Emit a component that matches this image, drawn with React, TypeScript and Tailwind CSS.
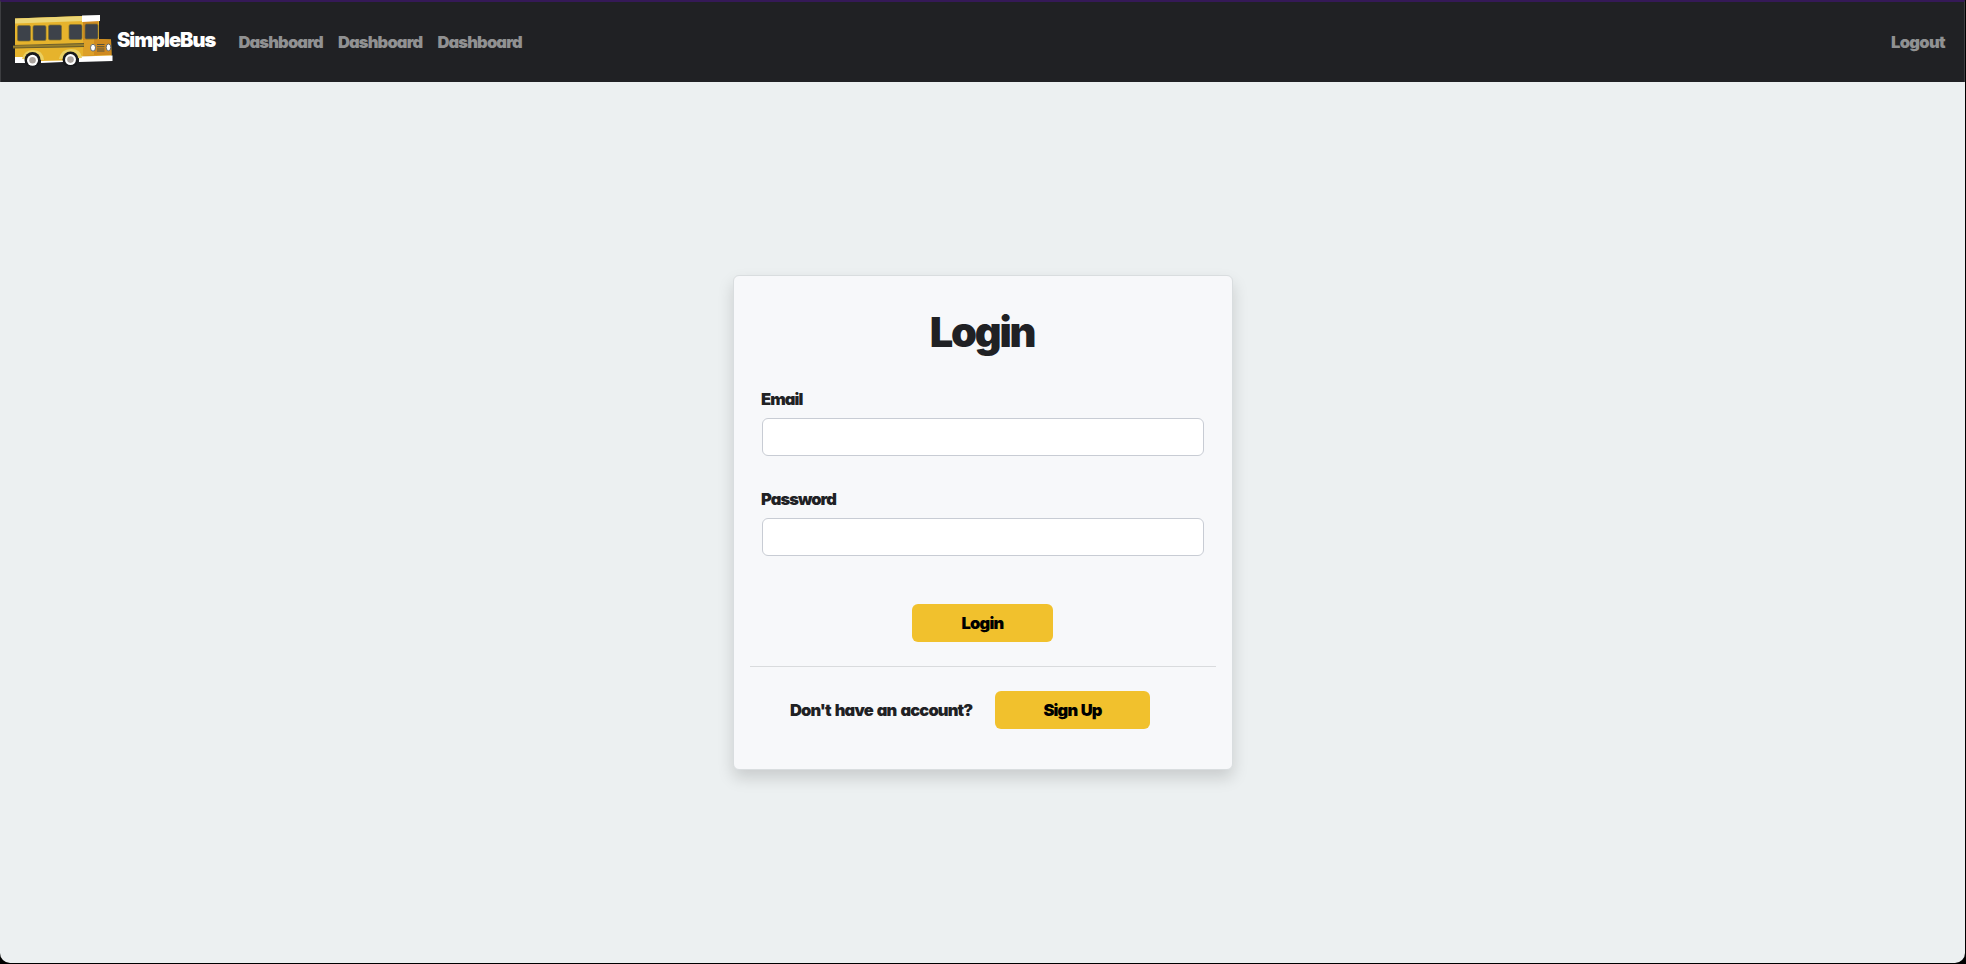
import type { ReactNode } from "react";

function BusLogo() {
  return (
    <svg viewBox="0 0 104 56" className="block h-14 w-[104px] shrink-0" aria-hidden="true">
      {/* body */}
      <path d="M4 8.5 L70 6 L88 9 L88 29 L100 29.5 L100.500 46 L4 49Z" fill="#e6b32c" />
      <path d="M4 8.500 L73 6 L73 11 L4 13.500Z" fill="#ecd676" />
      <path d="M72 10 L87 10 L87 29 L100 29.500 L100.500 45 L72 46Z" fill="#cf8a20" />
      <path d="M72 30 L83 29 L83 45 L72 46Z" fill="#dda028" />
      <path d="M71 5.500 L89 5 L89 11 L71 12Z" fill="#ffffff" />
      {/* lower edge between the wheels */}
      <path d="M30 47 L52 46 L52 51 L30 52Z" fill="#e6b32c" />
      {/* windows */}
      <g fill="#3d424a" stroke="#80702f" strokeWidth=".7">
        <rect x="6.500" y="15.500" width="13" height="15.500" rx="1.500" />
        <rect x="22" y="15.500" width="13" height="15" rx="1.500" />
        <rect x="37.500" y="15" width="13" height="15" rx="1.500" />
        <rect x="58" y="14.500" width="13" height="15" rx="1.500" />
        <rect x="74" y="14" width="13" height="15" rx="1.500" />
      </g>
      {/* side stripes */}
      <path d="M2 36 L73 33.200 L73 37 L2 38.200Z" fill="#99802b" />
      <path d="M2 35.500 L73 33.500 M2 38 L73 36.500" stroke="#59502c" strokeWidth=".8" />
      {/* skirt and bumper */}
      <path d="M4 47 L14 47 L14 53 L4 53Z M30 51 L52 50.500 L52 52 L30 53Z M68 46.500 L101.500 45.500 L101.500 51 L68 52Z" fill="#ffffff" />
      {/* wheel arches */}
      <path d="M11 49 Q13 40 22 40 Q32 40 33 50Z M48 49 Q50 39 60 39 Q70 39 71 48Z" fill="#ead063" />
      <circle cx="21.500" cy="50" r="8" fill="#18191c" />
      <circle cx="59.500" cy="49.500" r="8" fill="#18191c" />
      <circle cx="21.500" cy="50.300" r="5.500" fill="#ffffff" />
      <circle cx="59.500" cy="49.600" r="5.500" fill="#ffffff" />
      <circle cx="21.500" cy="50.300" r="3.300" fill="#aaa39e" />
      <circle cx="59.500" cy="49.600" r="3.300" fill="#aaa39e" />
      {/* grille and lamps */}
      <path d="M86 34.500h7.500M86 36.800h7.500M86 39h7.500M86 41h7.500" stroke="#56503c" strokeWidth="1.100" />
      <ellipse cx="82" cy="37.700" rx="2.500" ry="3.400" fill="#ffffff" stroke="#555f6b" strokeWidth=".9" />
      <ellipse cx="97.500" cy="37.400" rx="2.300" ry="3.400" fill="#ffffff" stroke="#555f6b" strokeWidth=".9" />
    </svg>
  );
}

function NavLink({ children }: { children: ReactNode }) {
  return (
    <a href="#" className="block w-[99.5px] whitespace-nowrap pl-2 tracking-[-0.85px] text-[#909192]">
      {children}
    </a>
  );
}

function Field({ label, type }: { label: string; type: string }) {
  return (
    <label className="block h-[100px]">
      <span className="-ml-px block h-[31px] leading-6 tracking-[-0.95px]">{label}</span>
      <input
        type={type}
        className="block h-[38px] w-full rounded-md border border-[#c8ccd4] bg-white px-3 outline-none"
      />
    </label>
  );
}

export default function App() {
  return (
    <div className="h-[964px] w-full bg-black pr-px pb-px">
      <div className="flex h-[963px] flex-col overflow-hidden rounded-b-[10px] bg-[#ecf0f1] font-['Inter',sans-serif] text-[16.5px] font-black text-[#202124] [font-feature-settings:'cv11']">
        <nav className="flex h-[82px] shrink-0 items-start border-t-2 border-r border-l border-t-[#351957] border-r-[#3d3e41] border-l-[#3d3e41] bg-[#202124] pl-[10px]">
          <div className="pt-2">
            <BusLogo />
          </div>
          <a
            href="#"
            className="ml-[2px] w-[113.5px] pt-[23px] text-[20px] leading-[30px] tracking-[-1px] text-white"
          >
            SimpleBus
          </a>
          <div className="flex pt-[28px] leading-6">
            <NavLink>Dashboard</NavLink>
            <NavLink>Dashboard</NavLink>
            <NavLink>Dashboard</NavLink>
          </div>
          <a href="#" className="mr-[19px] ml-auto pt-[28px] leading-6 tracking-[-0.65px] text-[#909192]">
            Logout
          </a>
        </nav>

        <main className="flex flex-1 justify-center pt-[193px] pl-px">
          <section className="h-[495px] w-[500px] rounded-md border border-[#d9dddf] bg-[#f7f8fa] px-4 shadow-[0_8px_16px_rgba(0,0,0,0.15)]">
            <h1 className="pt-[26px] pr-[2px] text-center text-[41.5px] leading-[60px] tracking-[-2.2px]">Login</h1>
            <div className="px-3 pt-[25px]">
              <Field label="Email" type="email" />
              <Field label="Password" type="password" />
            </div>
            <button
              type="button"
              className="mt-[17px] ml-[162px] block h-[38px] w-[141px] rounded-md bg-[#f1c12d] tracking-[-0.8px] text-black"
            >
              Login
            </button>
            <hr className="mt-6 border-[#d9dbdd]" />
            <div className="mt-6 flex items-center pl-10">
              <span className="w-[205px] whitespace-nowrap tracking-[-0.85px] [word-spacing:1.5px]">
                Don't have an account?
              </span>
              <button
                type="button"
                className="h-[38px] w-[155px] rounded-md bg-[#f1c12d] tracking-[-0.85px] text-black [word-spacing:1px]"
              >
                Sign Up
              </button>
            </div>
          </section>
        </main>
      </div>
    </div>
  );
}
